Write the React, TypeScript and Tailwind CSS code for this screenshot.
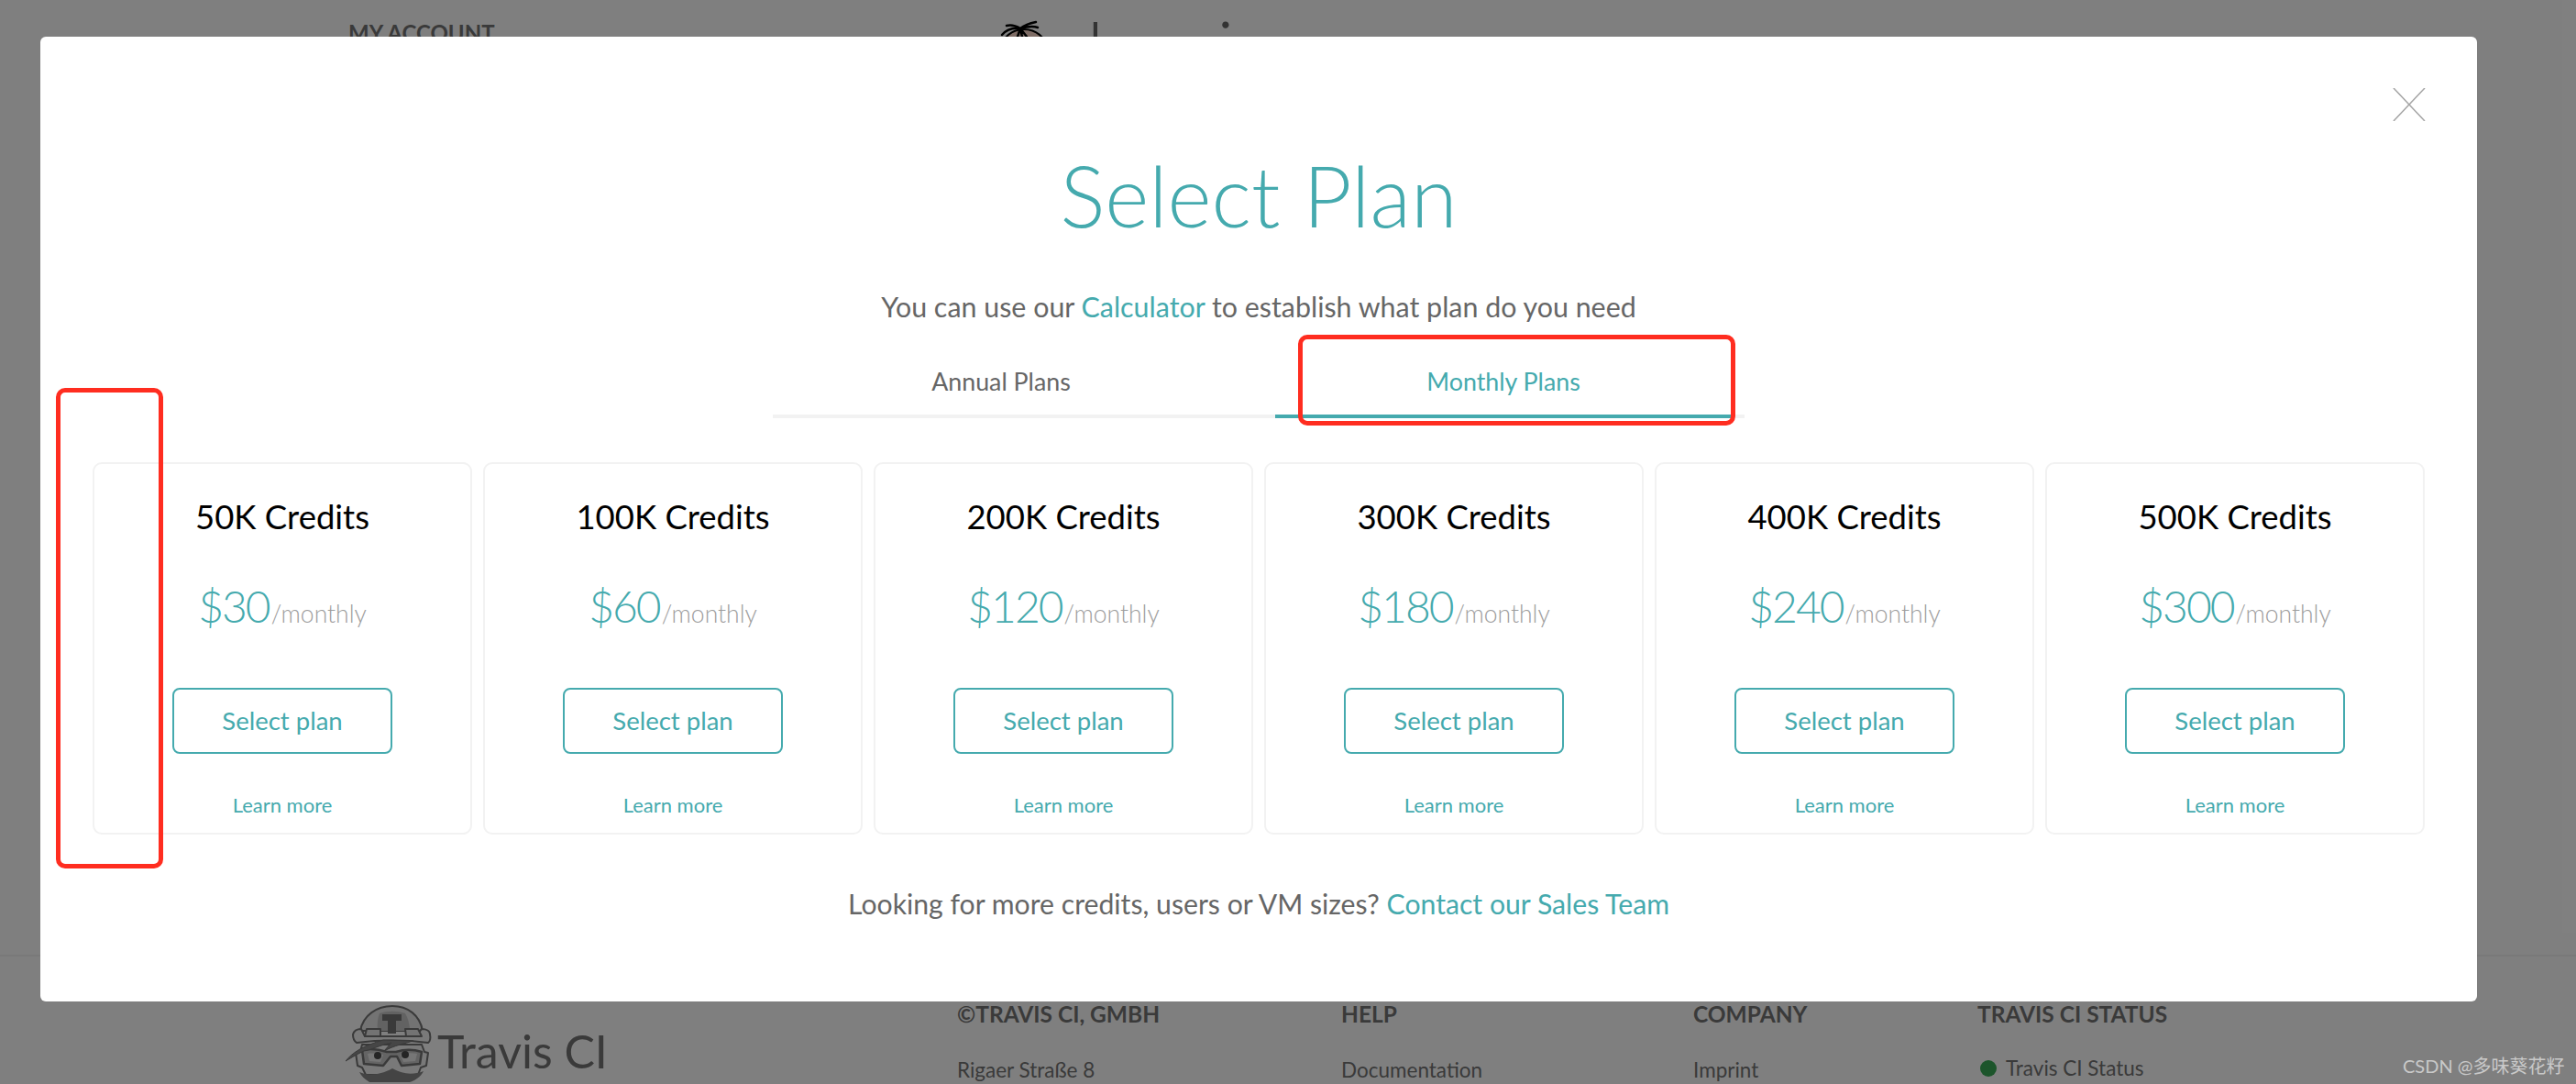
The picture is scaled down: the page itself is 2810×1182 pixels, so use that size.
const FONT = "font-['Lato','Liberation_Sans',sans-serif]";

const plans = [
  { credits: "50K Credits", price: "$30" },
  { credits: "100K Credits", price: "$60" },
  { credits: "200K Credits", price: "$120" },
  { credits: "300K Credits", price: "$180" },
  { credits: "400K Credits", price: "$240" },
  { credits: "500K Credits", price: "$300" },
];

const footerColumns = [
  { title: "©TRAVIS CI, GMBH", item: "Rigaer Straße 8", width: "w-[419px]" },
  { title: "HELP", item: "Documentation", width: "w-[384px]" },
  { title: "COMPANY", item: "Imprint", width: "w-[310px]" },
];

function Mascot() {
  return (
    <svg width="94" height="84" viewBox="0 0 94 84" fill="none" stroke="#747474" strokeWidth="2" strokeLinejoin="round">
      {/* helmet */}
      <path d="M16 28C19 11 34 1 51 1s30 10 33 27z" fill="#e6e6e6" />
      <path d="M35 28c-1-7 0-14 2-19 9-3 19-3 28 0 3 5 5 12 5 19z" fill="#c4c4c4" stroke="none" />
      <path d="M8 32c1-4 5-6 9-6l4 8h55l7-8c5 0 9 2 9 6 1 4 0 8-2 9-24-3-54-3-78 0-3-2-4-6-4-9z" fill="#f2f2f2" />
      <path d="M23 26h15v8H21zM65 26h14l4 8H66z" fill="#e6e6e6" />
      <path d="M40 10h21v7h-6v14h-9V17h-6z" fill="#747474" stroke="none" />
      {/* face */}
      <path d="M11 52l5-1 2-8h65l3 8 4 1-2 14-6 2-3 8H22l-4-8-5-2z" fill="#f2f2f2" />
      {/* goggles */}
      <path d="M18 49c9-2 18-1 27 2l10 0c9-3 19-3 28 0l-2 13-20 2-5-10-7 0-8 10-21-2z" fill="#c9c9c9" strokeWidth="2.5" />
      <path d="M24 53c6-1 12 0 17 1l-3 8-12-1zM60 54c6-2 12-2 18-1l-2 8-13 1z" fill="#ededed" stroke="none" />
      <circle cx="35" cy="55" r="4" fill="#4a4a4a" stroke="none" />
      <circle cx="65" cy="54" r="4" fill="#4a4a4a" stroke="none" />
      {/* hair */}
      <path d="M0 61C8 51 20 44 41 38l33 1c-10 3-21 5-32 11l8-9c-14 3-22 8-30 9-7 3-13 7-20 11z" fill="#8c8c8c" strokeWidth="1" />
      {/* moustache */}
      <path d="M15 73c9 4 21 4 36-4 12 7 23 7 34 3-3 6-9 10-15 12H26c-5-3-9-7-11-11z" fill="#888" stroke="none" />
    </svg>
  );
}

function AccountMascot() {
  return (
    <svg width="50" height="40" viewBox="0 0 50 40" fill="none">
      <ellipse cx="27" cy="30" rx="24" ry="20" fill="#fcd9ca" stroke="#000" strokeWidth="2" />
      <path d="M23 9C16 8 8 10 3 16M23 9C18 6 12 5 8 6M23 9C28 5 35 3 40 2M23 9C30 7 37 6 42 8M23 9L20 18M23 9L25 18M23 9L30 18" stroke="#000" strokeWidth="2.5" strokeLinecap="round" />
    </svg>
  );
}

function PlanCard({ credits, price }: { credits: string; price: string }) {
  return (
    <div className="flex h-[406px] w-[414px] shrink-0 flex-col items-center rounded-[10px] border-2 border-[#f2f2f2] pt-[29px]">
      <h3 className="h-[56px] text-[36.5px] leading-[56px] font-normal text-black">{credits}</h3>
      <div className="mt-[37px] flex h-[66px] items-baseline leading-[66px]">
        <span className="text-[48px] font-light tracking-[-2px] text-[#45aaae]">{price}</span>
        <span className="ml-[2px] text-[26.5px] font-light text-[#9d9d9d]">/monthly</span>
      </div>
      <button className="mt-[56px] h-[72px] w-[240px] rounded-[8px] border-2 border-[#45aaae] text-[27.5px] text-[#45aaae]">
        Select plan
      </button>
      <a className="mt-[41px] text-[22px] leading-[30px] text-[#45aaae]">Learn more</a>
    </div>
  );
}

export default function App() {
  return (
    <div className={`${FONT} relative h-[1182px] w-[2810px] overflow-hidden bg-white`}>
      {/* page behind the dialog */}
      <div className="flex h-full flex-col text-[#747474]">
        <header className="flex h-[1042px] items-start pt-[22px]">
          <div className="-mt-[2px] ml-[380px] w-[710px] text-[24px] leading-[32px] font-bold">MY ACCOUNT</div>
          <AccountMascot />
          <div className="-mt-[16px] ml-[31px] text-[82px] leading-[90px] font-light tracking-[3px] text-[#666]">Jessica</div>
        </header>
        <footer className="flex flex-1 border-t-2 border-[#f2f2f2] pt-[48px]">
          <div className="ml-[377px] flex w-[667px] items-start pt-[5px]">
            <Mascot />
            <span className="mt-[20px] ml-[6px] text-[50px] leading-[60px] font-normal">Travis CI</span>
          </div>
          {footerColumns.map((col) => (
            <div key={col.title} className={col.width}>
              <h4 className="text-[24.5px] leading-[30px] font-bold">{col.title}</h4>
              <p className="mt-[31px] text-[22.5px] leading-[30px]">{col.item}</p>
            </div>
          ))}
          <div>
            <h4 className="text-[24.5px] leading-[30px] font-bold">TRAVIS CI STATUS</h4>
            <p className="mt-[29px] flex items-center text-[22.5px] leading-[30px]">
              <span className="mr-[10px] ml-[3px] h-[18px] w-[18px] rounded-full bg-[#39aa56]" />
              Travis CI Status
            </p>
          </div>
        </footer>
      </div>

      {/* overlay + dialog */}
      <div className="absolute inset-0 bg-black/50 pt-[40px] pl-[44px]">
        <div className="relative flex h-[1052px] w-[2658px] flex-col items-center rounded-[6px] bg-white pt-[113px]">
          <button className="absolute top-[56px] right-[56px] text-[#a5a5a5]">
            <svg width="36" height="36" viewBox="0 0 36 36" stroke="currentColor" strokeWidth="1.5">
              <path d="M1 0L35 36M35 0L1 36" />
            </svg>
          </button>
          <h1 className="text-[92px] leading-[120px] font-light text-[#45aaae]">Select Plan</h1>
          <p className="mt-[41px] text-[30.4px] leading-[40px] text-[#666]">
            You can use our <a className="text-[#45aaae]">Calculator</a> to establish what plan do you need
          </p>
          <div className="mt-[46px] flex w-[1060px] gap-[50px] border-b-4 border-[#f2f2f2] pr-[14px]">
            <div className="-mb-[4px] h-[56px] w-[498px] border-b-4 border-transparent text-center text-[26.8px] leading-[32px] text-[#666]">
              Annual Plans
            </div>
            <div className="-mb-[4px] h-[56px] w-[498px] border-b-4 border-[#45aaae] text-center text-[26.8px] leading-[32px] text-[#45aaae]">
              Monthly Plans
            </div>
          </div>
          <div className="mt-[48px] flex gap-[12px]">
            {plans.map((plan) => (
              <PlanCard key={plan.credits} credits={plan.credits} price={plan.price} />
            ))}
          </div>
          <p className="mt-[55px] text-[30.2px] leading-[40px] text-[#666]">
            Looking for more credits, users or VM sizes? <a className="text-[#45aaae]">Contact our Sales Team</a>
          </p>
        </div>
      </div>

      {/* red annotation boxes from the screenshot */}
      <div className="absolute top-[365px] left-[1416px] h-[99px] w-[477px] rounded-[10px] border-[5px] border-[#ff2d20]" />
      <div className="absolute top-[423px] left-[61px] h-[524px] w-[117px] rounded-[10px] border-[5px] border-[#ff2d20]" />

      {/* watermark */}
      <div className="absolute top-[1148px] left-[2621px] font-['Lato','Noto_Sans_CJK_SC',sans-serif] text-[20px] leading-[28px] text-[#c9c9c9]">
        CSDN @多味葵花籽
      </div>
    </div>
  );
}
